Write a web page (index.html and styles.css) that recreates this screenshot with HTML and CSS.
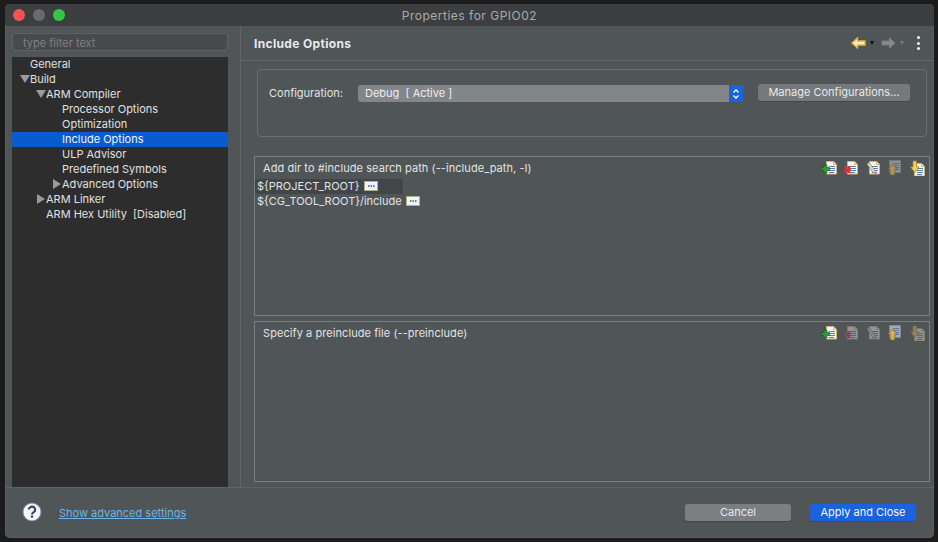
FILE: index.html
```html
<!DOCTYPE html>
<html lang="en">
<head>
<meta charset="utf-8">
<title>Properties for GPIO02</title>
<link rel="stylesheet" href="styles.css">
</head>
<body>
<svg class="defs" width="0" height="0" aria-hidden="true">
  <defs>
    <g id="doc">
      <path d="M.5.500h7l3 3v9.500H.500z" fill="#f4f6fa" stroke="#d2b56c"/>
      <path d="M7.500.500v3h3" fill="#fff3c8" stroke="#d2b56c"/>
      <path d="M3 5.500h6M3 7.500h6M3 9.500h6M3 11.500h5" stroke="#5a7db8" fill="none"/>
    </g>
    <g id="i-add">
      <use href="#doc" x="5" y="1"/>
      <path d="M3 5h3v2.500h2.500v3H6V13H3v-2.500H.500v-3H3z" fill="#2f9a3a" stroke="#14551e" stroke-width=".6"/>
    </g>
    <g id="i-del">
      <use href="#doc" x="4" y="1"/>
      <path d="M1 6h2l1 1 1-1h3l-1 2 1 1-1 2 1 2H5l-1-1-1 1H1l1-2-1-2 1-1z" fill="#e0303a"/>
    </g>
    <g id="i-edit">
      <use href="#doc" x="4" y="1"/>
      <path d="M2 4l2-1.500 6 8 .8 3-3-1.200z" fill="#e4d6b8" stroke="#8d7a55" stroke-width=".7"/>
    </g>
    <g id="i-up">
      <path d="M2.500.500h11v12h-11z" fill="#b8bcc2" stroke="#8e9196"/>
      <path d="M6 3.500h6M6 5.500h6M9 7.500h3M9 9.500h3" stroke="#5a7db8" fill="none"/>
      <path d="M5.500 4l4.500 5H7.800v6H3.200V9H1z" fill="#e9c260" stroke="#8a6a24" stroke-width=".8"/>
    </g>
    <g id="i-down">
      <use href="#doc" x="5" y="3"/>
      <path d="M4 1h3.500v6H10L5.800 12.500 1.500 7H4z" fill="#f7cf55" stroke="#a88320" stroke-width=".8"/>
    </g>
    <g id="i-ell">
      <rect x=".5" y=".5" width="13" height="9" fill="#eef4fb" stroke="#b3ad84"/>
      <path d="M4 5h1.500M6.500 5H8M9 5h1.500" stroke="#33568f" stroke-width="1.500"/>
    </g>
  </defs>
</svg>

<div class="window">
  <header class="titlebar">
    <span class="light light-close"></span>
    <span class="light light-min"></span>
    <span class="light light-max"></span>
    <span class="window-title">Properties for GPIO02</span>
  </header>

  <div class="body">
    <aside class="sidebar">
      <input class="filter" type="text" placeholder="type filter text">
      <ul class="tree">
        <li class="row lvl-0"><span class="twisty"></span>General</li>
        <li class="row lvl-0"><span class="twisty open"></span>Build</li>
        <li class="row lvl-1"><span class="twisty open"></span>ARM Compiler</li>
        <li class="row lvl-2"><span class="twisty"></span>Processor Options</li>
        <li class="row lvl-2"><span class="twisty"></span>Optimization</li>
        <li class="row lvl-2 selected"><span class="twisty"></span>Include Options</li>
        <li class="row lvl-2"><span class="twisty"></span>ULP Advisor</li>
        <li class="row lvl-2"><span class="twisty"></span>Predefined Symbols</li>
        <li class="row lvl-2"><span class="twisty closed"></span>Advanced Options</li>
        <li class="row lvl-1"><span class="twisty closed"></span>ARM Linker</li>
        <li class="row lvl-1"><span class="twisty"></span>ARM Hex Utility&nbsp; [Disabled]</li>
      </ul>
    </aside>

    <main class="main">
      <div class="page-head">
        <h1 class="page-title">Include Options</h1>
        <div class="nav">
          <svg class="nav-arrow" width="15" height="12" viewBox="0 0 15 12"><path d="M1 6l5.500-5v3h7.500v4H6.500v3z" fill="#fff2c4" stroke="#e8b23c" stroke-width="1.400"/></svg>
          <span class="caret caret-on"></span>
          <svg class="nav-arrow nav-next" width="15" height="12" viewBox="0 0 15 12"><path d="M14 6L8.500 1v3H1v4h7.500v3z" fill="#868a8c" stroke="#7b7f81"/></svg>
          <span class="caret caret-off"></span>
          <span class="kebab"><i></i><i></i><i></i></span>
        </div>
      </div>

      <section class="config">
        <span class="config-label">Configuration:</span>
        <div class="select">
          <span class="select-value">Debug&nbsp; [ Active ]</span>
          <span class="stepper">
            <svg width="14" height="16" viewBox="0 0 14 16"><path d="M4.500 6.500L7 4l2.500 2.500M4.500 9.500L7 12l2.500-2.500" fill="none" stroke="#fff" stroke-width="1.300"/></svg>
          </span>
        </div>
        <button class="btn btn-manage" type="button">Manage Configurations...</button>
      </section>

      <section class="panel panel-paths">
        <div class="panel-head">
          <span>Add dir to #include search path (--include_path, -I)</span>
          <div class="tools">
            <svg class="tool" viewBox="0 0 16 16"><use href="#i-add"/></svg>
            <svg class="tool" viewBox="0 0 16 16"><use href="#i-del"/></svg>
            <svg class="tool" viewBox="0 0 16 16"><use href="#i-edit"/></svg>
            <svg class="tool up-off" viewBox="0 0 16 16"><use href="#i-up"/></svg>
            <svg class="tool" viewBox="0 0 16 16"><use href="#i-down"/></svg>
          </div>
        </div>
        <ul class="paths">
          <li class="path path-selected">${PROJECT_ROOT}<svg class="ell" viewBox="0 0 14 10"><use href="#i-ell"/></svg></li>
          <li class="path">${CG_TOOL_ROOT}/include<svg class="ell" viewBox="0 0 14 10"><use href="#i-ell"/></svg></li>
        </ul>
      </section>

      <section class="panel panel-pre">
        <div class="panel-head">
          <span>Specify a preinclude file (--preinclude)</span>
          <div class="tools">
            <svg class="tool" viewBox="0 0 16 16"><use href="#i-add"/></svg>
            <svg class="tool dim" viewBox="0 0 16 16"><use href="#i-del"/></svg>
            <svg class="tool dim" viewBox="0 0 16 16"><use href="#i-edit"/></svg>
            <svg class="tool semi" viewBox="0 0 16 16"><use href="#i-up"/></svg>
            <svg class="tool dim" viewBox="0 0 16 16"><use href="#i-down"/></svg>
          </div>
        </div>
      </section>
    </main>
  </div>

  <footer class="footer">
    <svg class="help" width="20" height="20" viewBox="0 0 20 20">
      <circle cx="10" cy="10" r="9" fill="#f5f7fa" stroke="#7f8ea8" stroke-width="1"/>
      <path d="M6.800 7.600a3.200 3 0 1 1 4.900 2.600c-1.100.7-1.700 1.100-1.700 2.300" fill="none" stroke="#33415c" stroke-width="2.100"/>
      <rect x="8.900" y="13.500" width="2.200" height="2.200" fill="#33415c"/>
    </svg>
    <a class="advanced" href="#">Show advanced settings</a>
    <div class="actions">
      <button class="btn btn-cancel" type="button">Cancel</button>
      <button class="btn btn-primary" type="button">Apply and Close</button>
    </div>
  </footer>
</div>
</body>
</html>
```
FILE: styles.css
```css
* { box-sizing: border-box; }

html, body {
  margin: 0;
  height: 100%;
  overflow: hidden;
}

body {
  background: #1c1c1d;
  font-family: Inter, "Liberation Sans", sans-serif;
  font-size: 11px;
  color: #e2e4e5;
  padding: 4px 4px 4px 5px;
}

.defs { position: absolute; }

.window {
  width: 929px;
  height: 534px;
  background: #505558;
  border-radius: 5px;
  overflow: hidden;
  display: flex;
  flex-direction: column;
  box-shadow: inset 0 0 0 1px #5a5e61;
}

.titlebar {
  height: 22px;
  flex: none;
  display: flex;
  align-items: center;
  gap: 8px;
  padding-left: 8px;
  background: #3c3e3f;
  position: relative;
}

.light {
  width: 12px;
  height: 12px;
  border-radius: 50%;
}
.light-close { background: #f25450; }
.light-min { background: #6a6a6a; }
.light-max { background: #33c748; }

.window-title {
  position: absolute;
  left: 0;
  right: 0;
  text-align: center;
  font-size: 12px;
  color: #a9abac;
  letter-spacing: .5px;
}

.body {
  flex: 1;
  display: flex;
  min-height: 0;
}

.sidebar {
  width: 236px;
  flex: none;
  padding: 7px 12px 0 7px;
  display: flex;
  flex-direction: column;
  gap: 6px;
  border-right: 1px solid #5f6467;
}

.filter {
  height: 18px;
  flex: none;
  width: 100%;
  padding: 2px 10px 0;
  background: #47494b;
  border: 1px solid #5e6264;
  border-radius: 3px;
  color: #e2e4e5;
  font: inherit;
  outline: none;
}
.filter::placeholder { color: #7f8183; opacity: 1; }

.tree {
  flex: 1;
  list-style: none;
  margin: 0;
  padding: 0;
  background: #2d2d2d;
}

.row {
  height: 15px;
  padding-bottom: 2px;
  display: flex;
  align-items: center;
  color: #e0e0e0;
  white-space: nowrap;
}
.lvl-0 { padding-left: 8px; }
.lvl-1 { padding-left: 24px; }
.lvl-2 { padding-left: 40px; }
.row.selected { background: #0b5bd0; color: #f2f6fc; }

.twisty {
  width: 10px;
  height: 10px;
  flex: none;
  position: relative;
}
.twisty.open::before {
  content: "";
  position: absolute;
  left: 0;
  top: 1px;
  border-left: 5px solid transparent;
  border-right: 5px solid transparent;
  border-top: 8px solid #9a9a9a;
}
.twisty.closed::before {
  content: "";
  position: absolute;
  left: 1px;
  top: 0;
  border-top: 5px solid transparent;
  border-bottom: 5px solid transparent;
  border-left: 8px solid #9a9a9a;
}

.main {
  flex: 1;
  min-width: 0;
  display: flex;
  flex-direction: column;
  padding-bottom: 5px;
}

.page-head {
  height: 35px;
  flex: none;
  display: flex;
  align-items: center;
  justify-content: space-between;
  padding: 0 14px 0 13px;
  border-bottom: 1px solid #62676a;
}

.page-title {
  margin: 0;
  font-size: 12px;
  font-weight: 700;
  color: #e8eaeb;
  letter-spacing: .35px;
}

.nav {
  display: flex;
  align-items: center;
}
.nav-arrow { flex: none; }
.caret {
  width: 0;
  height: 0;
  margin-left: 4px;
  border-left: 2.500px solid transparent;
  border-right: 2.500px solid transparent;
  border-top: 4px solid #111;
}
.caret-off { border-top-color: #75797b; }
.nav-next { margin-left: 7px; }
.kebab {
  margin-left: 13px;
  width: 3px;
  display: flex;
  flex-direction: column;
  gap: 2.500px;
}
.kebab i {
  display: block;
  width: 3px;
  height: 3px;
  background: #f4f4f4;
  border-radius: 50%;
}

.config {
  height: 68px;
  flex: none;
  margin: 8px 7px 0 16px;
  padding: 15px 15px 0 11px;
  border: 1px solid #696e71;
  border-radius: 4px;
  display: flex;
  align-items: flex-start;
}
.config-label {
  width: 89px;
  flex: none;
  line-height: 17px;
}

.select {
  width: 385px;
  height: 17px;
  flex: none;
  display: flex;
  background: #828688;
  border-radius: 3px;
  overflow: hidden;
}
.select-value {
  flex: 1;
  padding-left: 7px;
  line-height: 17px;
  color: #eceeee;
}
.stepper {
  width: 14px;
  background: #1d62d8;
  display: flex;
  align-items: center;
}

.btn {
  height: 17px;
  padding: 0;
  border: 0;
  border-radius: 3px;
  font: inherit;
  color: #e8eaea;
  box-shadow: 0 1px 0 #44484a;
}
.btn-manage {
  width: 152px;
  margin-left: 15px;
  margin-top: -1px;
  padding-bottom: 2px;
  background: #75797b;
}
.btn-cancel {
  width: 106px;
  background: #7b7f81;
}
.btn-primary {
  width: 106px;
  background: #1a63dc;
  color: #f3f7fd;
}

.panel {
  flex: none;
  margin: 0 4px 0 13px;
  border: 1px solid #7b7f82;
}
.panel-paths {
  height: 160px;
  margin-top: 19px;
}
.panel-pre {
  height: 161px;
  margin-top: 5px;
}

.panel-head {
  height: 22px;
  display: flex;
  align-items: center;
  justify-content: space-between;
  padding: 0 4px 0 8px;
  letter-spacing: .07px;
}

.tools {
  display: flex;
  gap: 6px;
}
.tool {
  width: 16px;
  height: 16px;
  flex: none;
}
.tool.dim { opacity: .4; }
.tool.up-off { opacity: .6; }
.tool.semi { opacity: .85; }

.paths {
  list-style: none;
  margin: 0;
  padding: 0;
}
.path {
  height: 14.500px;
  padding-left: 2px;
  display: flex;
  align-items: center;
}
.path-selected {
  width: 148px;
  background: #434648;
}
.ell {
  width: 14px;
  height: 10px;
  margin-left: 4.500px;
  flex: none;
}

.footer {
  height: 51px;
  flex: none;
  display: flex;
  align-items: center;
  padding: 0 18px 2px 17px;
  border-top: 1px solid #5f6467;
}
.help { flex: none; }
.advanced {
  margin-left: 17px;
  margin-top: 2px;
  color: #69b7ea;
  text-decoration: underline;
}
.actions {
  margin-left: auto;
  display: flex;
  gap: 19px;
}
```
